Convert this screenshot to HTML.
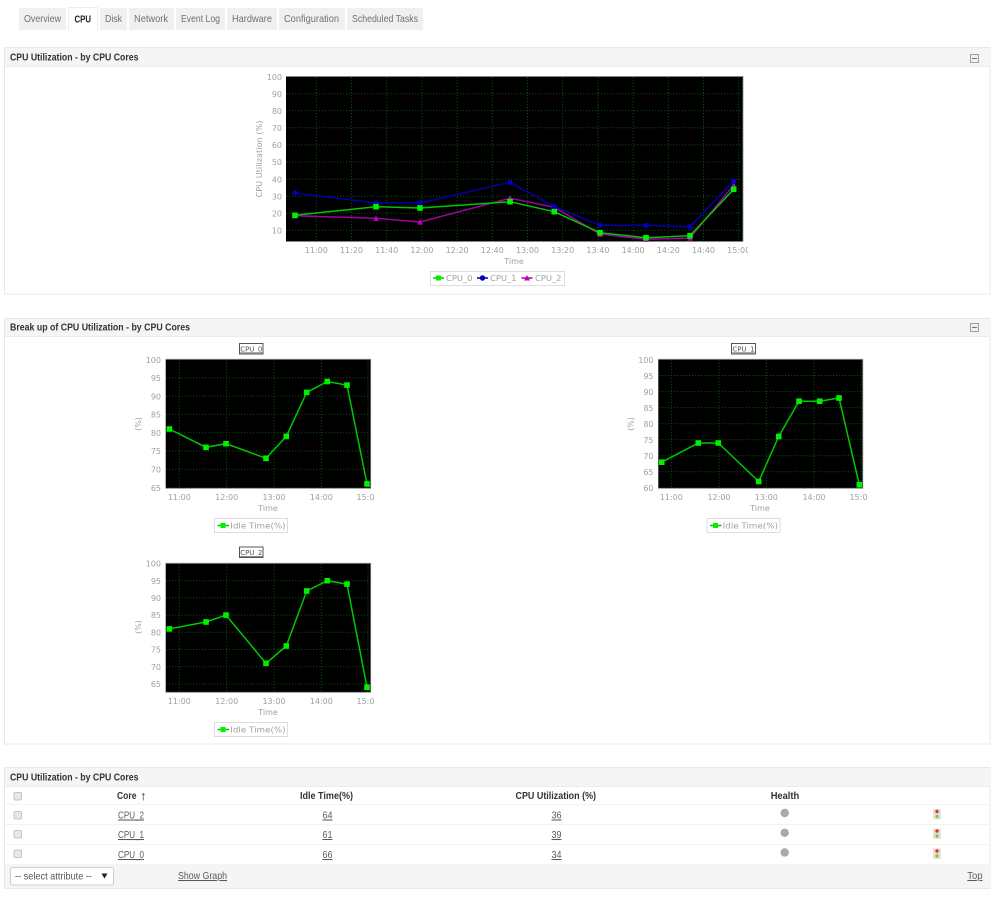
<!DOCTYPE html>
<html><head><meta charset="utf-8"><title>CPU</title>
<style>
html,body{margin:0;padding:0;background:#fff;width:1000px;height:904px;overflow:hidden}
svg{display:block;filter:blur(.35px)}
text{font-family:"Liberation Sans",sans-serif;font-size:10.4px}
.tab{fill:#707070}
.h{font-weight:bold;fill:#333}
.l{fill:#5a5a5a;text-decoration:underline}
.c{font-family:"DejaVu Sans",sans-serif;font-size:8px;fill:#a0a0a0}
.e{text-anchor:end}
.m{text-anchor:middle}
.g{stroke:#0a4c0a;stroke-width:1;stroke-dasharray:1.2 1.8;fill:none}
.g0{stroke:#00c800;stroke-width:1.5;fill:none;marker-start:url(#ms);marker-mid:url(#ms);marker-end:url(#ms)}
.g1{stroke:#0000a8;stroke-width:1.5;fill:none;marker-start:url(#mc);marker-mid:url(#mc);marker-end:url(#mc)}
.g2{stroke:#a000a0;stroke-width:1.5;fill:none;marker-start:url(#mt);marker-mid:url(#mt);marker-end:url(#mt)}
.ttl{font-family:"DejaVu Sans",sans-serif;font-size:7px;fill:#555;text-decoration:underline;text-anchor:middle}
.cb{fill:#e8e8e8;stroke:#c4c4c4;stroke-width:1}
</style></head><body>
<svg width="1000" height="904" viewBox="0 0 1000 904" xmlns="http://www.w3.org/2000/svg">
<defs>
<marker id="ms" markerUnits="userSpaceOnUse" markerWidth="6" markerHeight="6" refX="3" refY="3"><rect x=".2" y=".2" width="5.6" height="5.6" fill="#00f000"/></marker>
<marker id="mc" markerUnits="userSpaceOnUse" markerWidth="6" markerHeight="6" refX="3" refY="3"><circle cx="3" cy="3" r="2.7" fill="#0000b4"/></marker>
<marker id="mt" markerUnits="userSpaceOnUse" markerWidth="6" markerHeight="6" refX="3" refY="3"><path d="M3 .2L5.8 5.6H.2Z" fill="#c000c0"/></marker>
</defs>

<!-- tabs -->
<g fill="#f0f0f0">
<rect x="19" y="8" width="47" height="22"/><rect x="100" y="8" width="27" height="22"/><rect x="129" y="8" width="45" height="22"/>
<rect x="176" y="8" width="49" height="22"/><rect x="227" y="8" width="50" height="22"/><rect x="279" y="8" width="66" height="22"/><rect x="347" y="8" width="76" height="22"/>
</g>
<path d="M68.5 31V7.5H97.5V31" fill="#fff" stroke="#eee"/>
<text class="tab" x="24" y="22" textLength="37" lengthAdjust="spacingAndGlyphs">Overview</text>
<text class="h" x="74.5" y="22.5" textLength="16.5" lengthAdjust="spacingAndGlyphs" style="fill:#222">CPU</text>
<text class="tab" x="105" y="22" textLength="17" lengthAdjust="spacingAndGlyphs">Disk</text>
<text class="tab" x="134" y="22" textLength="34" lengthAdjust="spacingAndGlyphs">Network</text>
<text class="tab" x="181" y="22" textLength="39" lengthAdjust="spacingAndGlyphs">Event Log</text>
<text class="tab" x="232" y="22" textLength="40" lengthAdjust="spacingAndGlyphs">Hardware</text>
<text class="tab" x="284" y="22" textLength="55" lengthAdjust="spacingAndGlyphs">Configuration</text>
<text class="tab" x="352" y="22" textLength="66" lengthAdjust="spacingAndGlyphs">Scheduled Tasks</text>

<!-- panels -->
<g fill="#fff" stroke="#e8e8e8">
<rect x="4.5" y="47.5" width="985.5" height="246.5"/>
<rect x="4.5" y="318.5" width="985.5" height="425.5"/>
<rect x="4.5" y="767.5" width="985.5" height="121"/>
</g>
<g fill="#f5f5f5">
<rect x="5" y="48" width="985" height="18"/><rect x="5" y="319" width="985" height="17"/><rect x="5" y="768" width="985" height="18"/><rect x="5" y="864" width="985" height="24"/>
</g>
<path d="M5 66.5H990M5 336.5H990M5 786.5H990" stroke="#ececec"/>
<text class="h" x="10" y="60.5" textLength="128.5" lengthAdjust="spacingAndGlyphs">CPU Utilization - by CPU Cores</text>
<text class="h" x="10" y="330.5" textLength="180" lengthAdjust="spacingAndGlyphs">Break up of CPU Utilization - by CPU Cores</text>
<text class="h" x="10" y="780.5" textLength="128.5" lengthAdjust="spacingAndGlyphs">CPU Utilization - by CPU Cores</text>
<g fill="#f0f0f0" stroke="#a0a0a0"><rect x="970.5" y="54.5" width="8" height="8"/><rect x="970.5" y="323.5" width="8" height="8"/></g>
<path d="M972 58.5h5M972 327.5h5" stroke="#777"/>

<!-- main chart -->
<rect x="286" y="76.5" width="457" height="165" fill="#000"/>
<path d="M286 76.5H743V241.5M286 241.5H743" fill="none" stroke="#888" stroke-width=".8"/>
<path class="g" d="M316.3 77V241M351.5 77V241M386.7 77V241M421.9 77V241M457.1 77V241M492.3 77V241M527.5 77V241M562.7 77V241M597.9 77V241M633.1 77V241M668.3 77V241M703.5 77V241M738.7 77V241M286 230.3H743M286 213.2H743M286 196.2H743M286 179.1H743M286 162H743M286 144.9H743M286 127.8H743M286 110.8H743M286 93.7H743"/>
<polyline class="g2" points="295,215.7 376,218.3 420,222 510,198.3 554.3,207.3 600,234 646,239.3 690,238 733.7,185"/>
<polyline class="g1" points="295,193 376,203 420,203 510,182.3 554.3,206.7 600,225.3 646,225.3 690,226.7 733.7,181"/>
<polyline class="g0" points="295,215.3 376,206.7 420,208 510,201.7 554.3,211.7 600,232.7 646,237.7 690,235.7 733.7,189.3"/>
<text class="c e" x="282" y="80">100</text><text class="c e" x="282" y="97">90</text><text class="c e" x="282" y="114">80</text><text class="c e" x="282" y="131">70</text><text class="c e" x="282" y="148">60</text><text class="c e" x="282" y="165">50</text><text class="c e" x="282" y="182.5">40</text><text class="c e" x="282" y="199.5">30</text><text class="c e" x="282" y="216.5">20</text><text class="c e" x="282" y="233.5">10</text>
<text class="c m" x="316.3" y="253">11:00</text><text class="c m" x="351.5" y="253">11:20</text><text class="c m" x="386.7" y="253">11:40</text><text class="c m" x="421.9" y="253">12:00</text><text class="c m" x="457.1" y="253">12:20</text><text class="c m" x="492.3" y="253">12:40</text><text class="c m" x="527.5" y="253">13:00</text><text class="c m" x="562.7" y="253">13:20</text><text class="c m" x="597.9" y="253">13:40</text><text class="c m" x="633.1" y="253">14:00</text><text class="c m" x="668.3" y="253">14:20</text><text class="c m" x="703.5" y="253">14:40</text><text class="c m" x="738.7" y="253">15:00</text>
<rect x="748" y="244" width="12" height="12" fill="#fff"/>
<text class="c m" x="514" y="264">Time</text>
<text class="c" transform="translate(262,197.5) rotate(-90)" textLength="77" lengthAdjust="spacingAndGlyphs">CPU Utilization (%)</text>
<rect x="430.5" y="271.5" width="134" height="14" fill="#fff" stroke="#ddd"/>
<path d="M433 278h11" stroke="#00c800" stroke-width="1.5"/><rect x="436" y="275.5" width="5" height="5" fill="#00f000"/>
<text class="c" x="446" y="281" textLength="26.5" lengthAdjust="spacingAndGlyphs">CPU_0</text>
<path d="M477 278h11" stroke="#0000a8" stroke-width="1.5"/><circle cx="482.5" cy="278" r="2.7" fill="#0000b4"/>
<text class="c" x="490" y="281" textLength="26.5" lengthAdjust="spacingAndGlyphs">CPU_1</text>
<path d="M521.5 278h11" stroke="#a000a0" stroke-width="1.5"/><path d="M527 275l3 5.5h-6Z" fill="#c000c0"/>
<text class="c" x="535" y="281" textLength="26.5" lengthAdjust="spacingAndGlyphs">CPU_2</text>

<!-- small chart 1 -->
<rect x="239.5" y="343.5" width="23.5" height="10.5" fill="#fff" stroke="#555"/>
<text class="ttl" x="251.3" y="351.5">CPU_0</text>
<rect x="165.7" y="359.3" width="205" height="129" fill="#000"/>
<path d="M165.7 359.3H370.7V488.3H165.7" fill="none" stroke="#888" stroke-width=".8"/>
<path class="g" d="M179.3 360V488M226.7 360V488M274 360V488M321.3 360V488M368 360V488M166 377.8H370M166 396.1H370M166 414.4H370M166 432.7H370M166 451H370M166 469.3H370"/>
<polyline class="g0" points="169.3,429 206,447.3 226,443.7 266,458.3 286.3,436.4 306.7,392.4 327.3,381.5 347,385.1 367,483.9"/>
<text class="c e" x="161" y="363">100</text><text class="c e" x="161" y="381">95</text><text class="c e" x="161" y="399.5">90</text><text class="c e" x="161" y="417.5">85</text><text class="c e" x="161" y="436">80</text><text class="c e" x="161" y="454">75</text><text class="c e" x="161" y="472.5">70</text><text class="c e" x="161" y="491">65</text>
<text class="c m" x="179.3" y="500">11:00</text><text class="c m" x="226.7" y="500">12:00</text><text class="c m" x="274" y="500">13:00</text><text class="c m" x="321.3" y="500">14:00</text><text class="c m" x="368" y="500">15:00</text>
<rect x="375" y="491" width="12" height="12" fill="#fff"/>
<text class="c m" x="268" y="511">Time</text>
<text class="c m" transform="translate(141,424) rotate(-90)">(%)</text>
<rect x="214.5" y="518.5" width="73" height="14" fill="#fff" stroke="#ddd"/>
<path d="M217.5 525.5h11.5" stroke="#00c800" stroke-width="1.5"/><rect x="220.5" y="523" width="5" height="5" fill="#00f000"/>
<text class="c" x="230.3" y="528.5" textLength="55.3" lengthAdjust="spacingAndGlyphs">Idle Time(%)</text>

<!-- small chart 2 -->
<rect x="731.5" y="343.5" width="24" height="10.5" fill="#fff" stroke="#555"/>
<text class="ttl" x="743.5" y="351.5">CPU_1</text>
<rect x="658.3" y="359.3" width="204.5" height="129" fill="#000"/>
<path d="M658.3 359.3H862.8V488.3H658.3" fill="none" stroke="#888" stroke-width=".8"/>
<path class="g" d="M671.3 360V488M719 360V488M766.3 360V488M814 360V488M861 360V488M659 375.5H862M659 391.6H862M659 407.6H862M659 423.7H862M659 439.7H862M659 455.8H862M659 471.8H862"/>
<polyline class="g0" points="661.7,462.2 698.3,443 718.3,443 758.7,481.5 778.7,436.5 799,401.2 819.7,401.2 839,398 859.3,484.7"/>
<text class="c e" x="653.5" y="363">100</text><text class="c e" x="653.5" y="379">95</text><text class="c e" x="653.5" y="395">90</text><text class="c e" x="653.5" y="411">85</text><text class="c e" x="653.5" y="427">80</text><text class="c e" x="653.5" y="443">75</text><text class="c e" x="653.5" y="459">70</text><text class="c e" x="653.5" y="475">65</text><text class="c e" x="653.5" y="491">60</text>
<text class="c m" x="671.3" y="500">11:00</text><text class="c m" x="719" y="500">12:00</text><text class="c m" x="766.3" y="500">13:00</text><text class="c m" x="814" y="500">14:00</text><text class="c m" x="861" y="500">15:00</text>
<rect x="867.7" y="491" width="12" height="12" fill="#fff"/>
<text class="c m" x="760" y="511">Time</text>
<text class="c m" transform="translate(633.5,424) rotate(-90)">(%)</text>
<rect x="707" y="518.5" width="73" height="14" fill="#fff" stroke="#ddd"/>
<path d="M710 525.5h11.5" stroke="#00c800" stroke-width="1.5"/><rect x="713" y="523" width="5" height="5" fill="#00f000"/>
<text class="c" x="722.7" y="528.5" textLength="55.3" lengthAdjust="spacingAndGlyphs">Idle Time(%)</text>

<!-- small chart 3 -->
<rect x="239.5" y="547" width="23.5" height="10.5" fill="#fff" stroke="#555"/>
<text class="ttl" x="251.3" y="555">CPU_2</text>
<rect x="165.7" y="563.3" width="205" height="129" fill="#000"/>
<path d="M165.7 563.3H370.7V692.3H165.7" fill="none" stroke="#888" stroke-width=".8"/>
<path class="g" d="M179.3 564V692M226.7 564V692M274 564V692M321.3 564V692M368 564V692M166 580.7H370M166 597.9H370M166 615.1H370M166 632.3H370M166 649.5H370M166 666.7H370M166 683.9H370"/>
<polyline class="g0" points="169.3,628.9 206,622 226,615.1 266,663.3 286.3,646 306.7,591 327.3,580.7 347,584.1 367,687.3"/>
<text class="c e" x="161" y="566.5">100</text><text class="c e" x="161" y="584">95</text><text class="c e" x="161" y="601">90</text><text class="c e" x="161" y="618">85</text><text class="c e" x="161" y="635.5">80</text><text class="c e" x="161" y="652.5">75</text><text class="c e" x="161" y="670">70</text><text class="c e" x="161" y="687">65</text>
<text class="c m" x="179.3" y="704">11:00</text><text class="c m" x="226.7" y="704">12:00</text><text class="c m" x="274" y="704">13:00</text><text class="c m" x="321.3" y="704">14:00</text><text class="c m" x="368" y="704">15:00</text>
<rect x="375" y="695" width="12" height="12" fill="#fff"/>
<text class="c m" x="268" y="715">Time</text>
<text class="c m" transform="translate(141,627) rotate(-90)">(%)</text>
<rect x="214.5" y="722.5" width="73" height="14" fill="#fff" stroke="#ddd"/>
<path d="M217.5 729.5h11.5" stroke="#00c800" stroke-width="1.5"/><rect x="220.5" y="727" width="5" height="5" fill="#00f000"/>
<text class="c" x="230.3" y="732.5" textLength="55.3" lengthAdjust="spacingAndGlyphs">Idle Time(%)</text>

<!-- table -->
<path d="M5 804.5H990M5 824.5H990M5 844.5H990" stroke="#f2f2f2"/>
<rect class="cb" x="14" y="792.5" width="7.5" height="7.5" rx="1.5"/>
<rect class="cb" x="14" y="811.5" width="7.5" height="7.5" rx="1.5"/>
<rect class="cb" x="14" y="830.5" width="7.5" height="7.5" rx="1.5"/>
<rect class="cb" x="14" y="850" width="7.5" height="7.5" rx="1.5"/>
<text class="h" x="117" y="799" textLength="19.5" lengthAdjust="spacingAndGlyphs">Core</text>
<path d="M143.3 800.5V793.5M142 795L143.3 793.5L144.6 795" fill="none" stroke="#666" stroke-width=".8"/>
<text class="h" x="300" y="799" textLength="53" lengthAdjust="spacingAndGlyphs">Idle Time(%)</text>
<text class="h" x="515.5" y="799" textLength="80.5" lengthAdjust="spacingAndGlyphs">CPU Utilization (%)</text>
<text class="h" x="770.7" y="799" textLength="28.5" lengthAdjust="spacingAndGlyphs">Health</text>

<text class="l" x="118" y="818.5" textLength="26" lengthAdjust="spacingAndGlyphs">CPU_2</text>
<text class="l" x="118" y="838" textLength="26" lengthAdjust="spacingAndGlyphs">CPU_1</text>
<text class="l" x="118" y="858" textLength="26" lengthAdjust="spacingAndGlyphs">CPU_0</text>
<text class="l" x="322.5" y="818.5" textLength="10" lengthAdjust="spacingAndGlyphs">64</text>
<text class="l" x="322.5" y="838" textLength="10" lengthAdjust="spacingAndGlyphs">61</text>
<text class="l" x="322.5" y="858" textLength="10" lengthAdjust="spacingAndGlyphs">66</text>
<text class="l" x="551.5" y="818.5" textLength="10" lengthAdjust="spacingAndGlyphs">36</text>
<text class="l" x="551.5" y="838" textLength="10" lengthAdjust="spacingAndGlyphs">39</text>
<text class="l" x="551.5" y="858" textLength="10" lengthAdjust="spacingAndGlyphs">34</text>
<g fill="#aaa"><circle cx="784.7" cy="813" r="4.2"/><circle cx="784.7" cy="832.8" r="4.2"/><circle cx="784.7" cy="852.5" r="4.2"/></g>
<g fill="#e2e2e2"><rect x="933" y="809" width="8" height="10.5"/><rect x="933" y="828.5" width="8" height="10.5"/><rect x="933" y="848.5" width="8" height="10.5"/></g>
<g fill="#f03020"><circle cx="937" cy="811.5" r="1.7"/><circle cx="937" cy="831" r="1.7"/><circle cx="937" cy="851" r="1.7"/></g>
<g fill="#90c820"><circle cx="937" cy="816.5" r="1.7"/><circle cx="937" cy="836" r="1.7"/><circle cx="937" cy="856" r="1.7"/></g>

<rect x="10.5" y="867.5" width="103" height="17.5" rx="2.5" fill="#fff" stroke="#ccc"/>
<text x="15" y="879.5" fill="#555" textLength="77" lengthAdjust="spacingAndGlyphs">-- select attribute --</text>
<path d="M101.5 873.5h6l-3 5Z" fill="#222"/>
<text class="l" x="178" y="879" textLength="49" lengthAdjust="spacingAndGlyphs">Show Graph</text>
<text class="l" x="967.3" y="879" textLength="15.2" lengthAdjust="spacingAndGlyphs">Top</text>
</svg>
</body></html>
